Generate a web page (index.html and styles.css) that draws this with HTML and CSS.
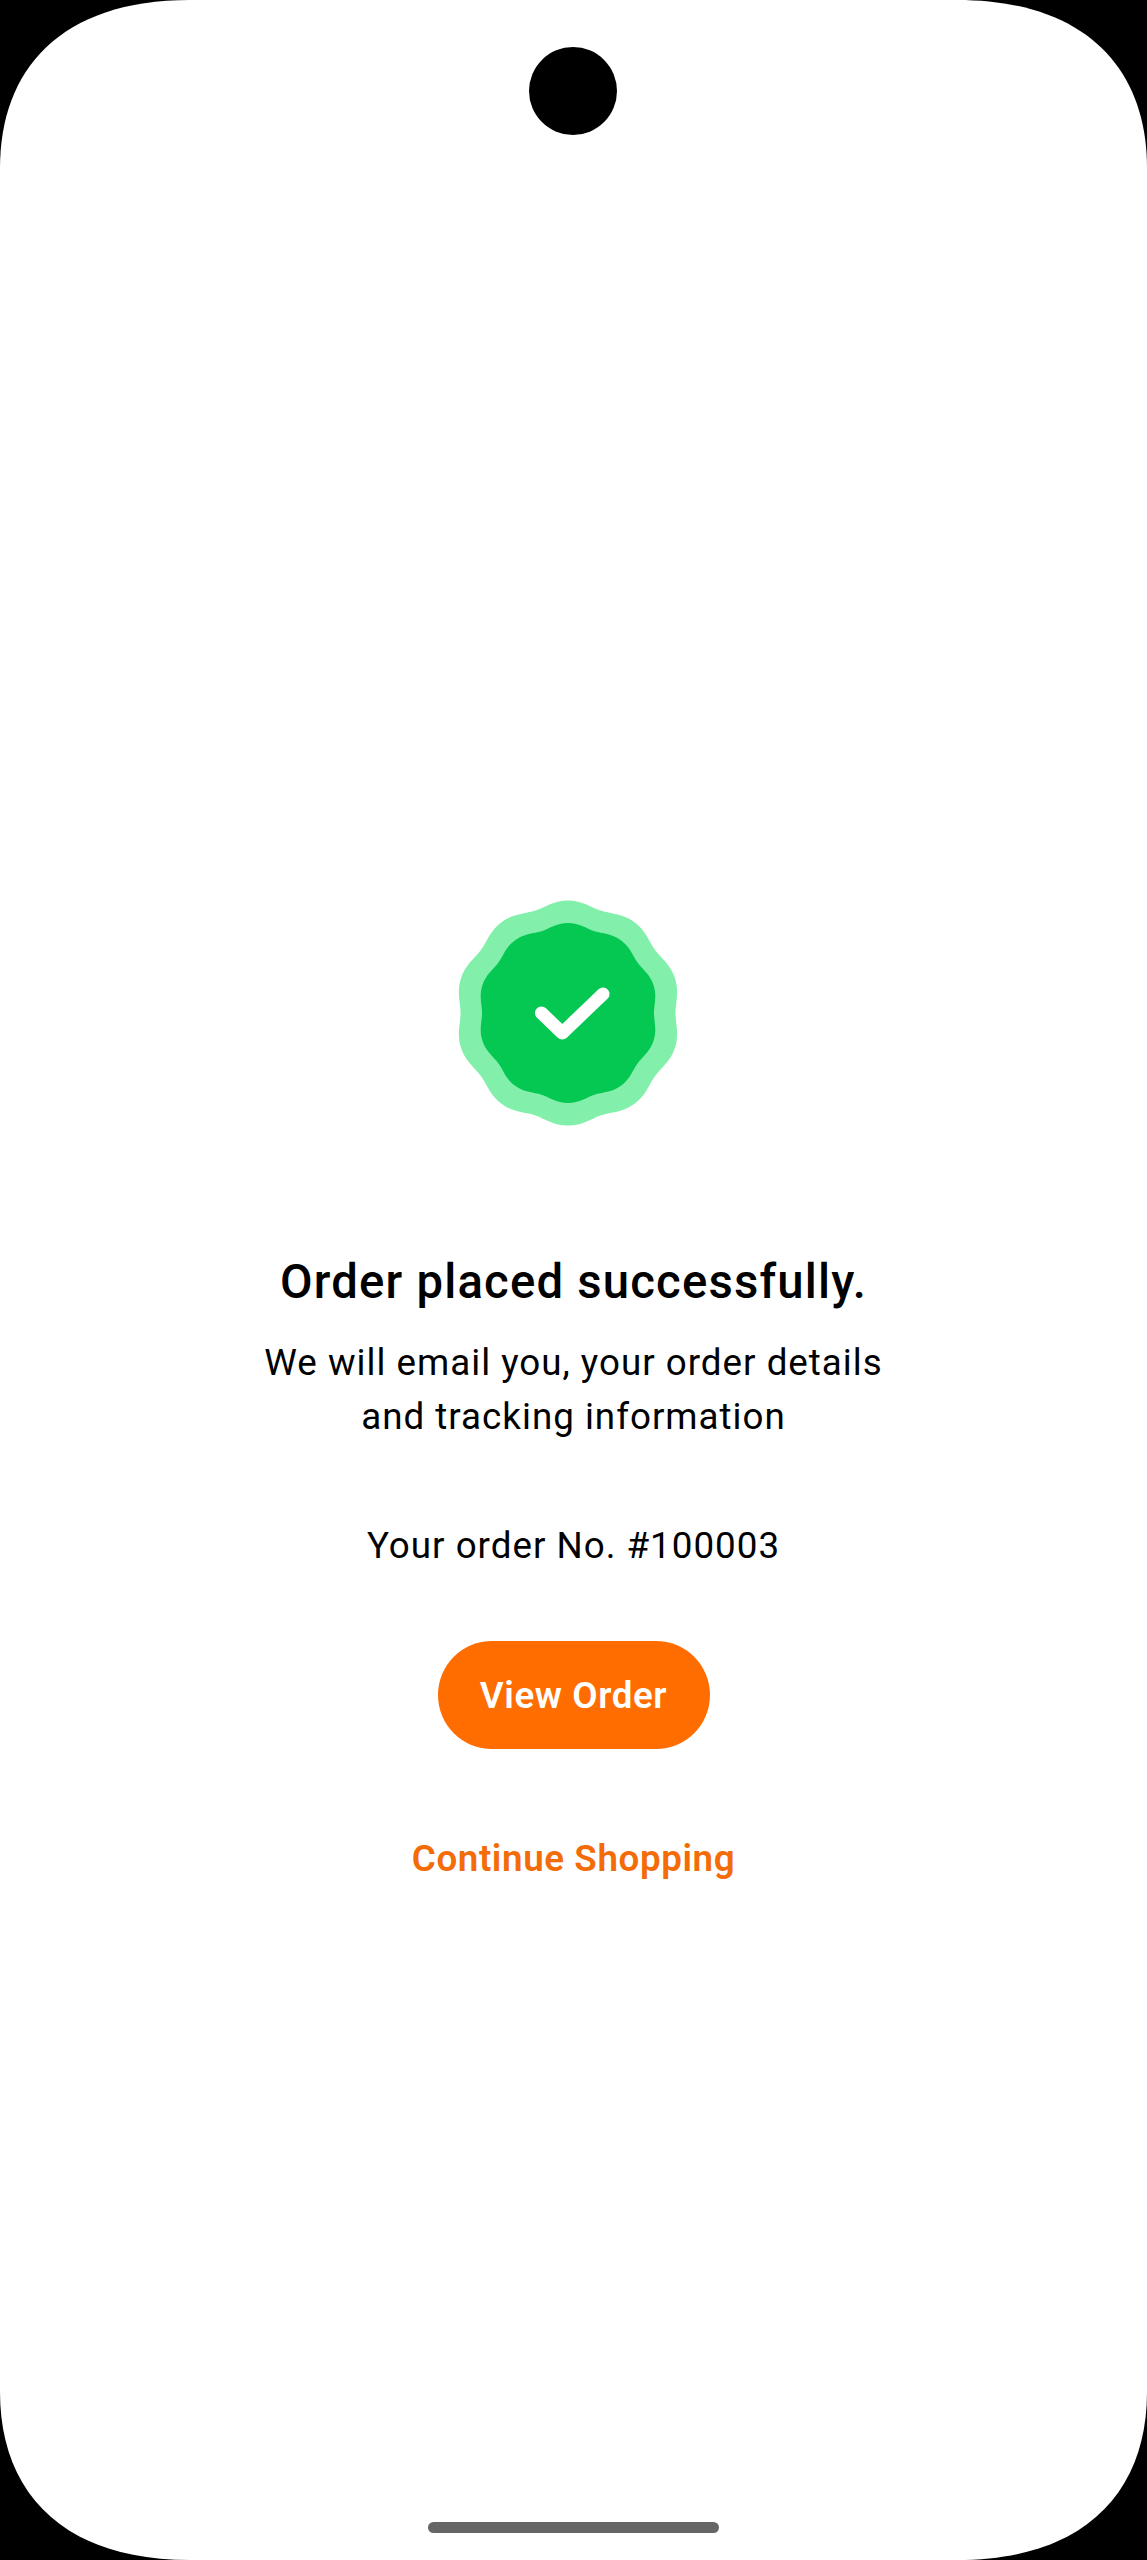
FILE: index.html
```html
<!DOCTYPE html>
<html>
<head>
  <title>Order placed</title>
  <link rel="stylesheet" href="styles.css">
</head>
<body>
  <div class="screen">
    <div class="camera"></div>

    <svg class="badge" width="226" height="226" viewBox="-113 -113 226 226">
      <defs>
        <path id="blob" d="M0 -100 C13 -100 20.95 -93.61 29.51 -90.83 C38.07 -88.05 48.26 -88.54 58.78 -80.9 C69.3 -73.26 71.97 -63.41 77.26 -56.13 C82.55 -48.85 91.09 -43.26 95.11 -30.9 C99.13 -18.54 95.5 -9 95.5 0 C95.5 9 99.13 18.54 95.11 30.9 C91.09 43.26 82.55 48.85 77.26 56.13 C71.97 63.41 69.3 73.26 58.78 80.9 C48.26 88.54 38.07 88.05 29.51 90.83 C20.95 93.61 13 100 0 100 C-13 100 -20.95 93.61 -29.51 90.83 C-38.07 88.05 -48.26 88.54 -58.78 80.9 C-69.3 73.26 -71.97 63.41 -77.26 56.13 C-82.55 48.85 -91.09 43.26 -95.11 30.9 C-99.13 18.54 -95.5 9 -95.5 0 C-95.5 -9 -99.13 -18.54 -95.11 -30.9 C-91.09 -43.26 -82.55 -48.85 -77.26 -56.13 C-71.97 -63.41 -69.3 -73.26 -58.78 -80.9 C-48.26 -88.54 -38.07 -88.05 -29.51 -90.83 C-20.95 -93.61 -13 -100 0 -100 Z"/>
      </defs>
      <use href="#blob" transform="scale(1.125)" fill="#82efab"/>
      <use href="#blob" transform="scale(0.9)" fill="#05c853"/>
      <path d="M-26.5 0 L-5.7 20 L35 -19" fill="none" stroke="#fff" stroke-width="13" stroke-linecap="round" stroke-linejoin="round"/>
    </svg>

    <h2 class="title">Order placed successfully.</h2>
    <p class="message">We will email you, your order details<br>and tracking information</p>
    <p class="order-no">Your order No. #100003</p>

    <button class="view-btn">View Order</button>
    <a class="continue-link" href="#">Continue Shopping</a>

    <div class="home-bar"></div>
  </div>
</body>
</html>
```

FILE: styles.css
```css
* {
  box-sizing: border-box;
}

body {
  margin: 0;
  background-color: #000;
  font-family: Roboto, "Liberation Sans", sans-serif;
  color: #000;
}

.screen {
  position: relative;
  width: 1147px;
  height: 2560px;
  padding-top: 900px;
  display: flex;
  flex-direction: column;
  align-items: center;
  background-color: #fff;
  clip-path: path("M190 0 H957 C1087 0 1147 70 1147 168 V2392 C1147 2490 1087 2560 957 2560 H190 C60 2560 0 2490 0 2392 V168 C0 70 60 0 190 0 Z");
}

.camera {
  position: absolute;
  top: 47px;
  left: 529px;
  width: 88px;
  height: 88px;
  border-radius: 50%;
  background-color: #000;
}

.badge {
  display: block;
  margin-right: 11px;
}

.title {
  margin: 126px 0 0;
  font-size: 47.25px;
  font-weight: 500;
  line-height: 60px;
  letter-spacing: 1.2px;
}

.message {
  margin: 24px 0 0;
  font-size: 36.75px;
  line-height: 54px;
  letter-spacing: 1px;
  text-align: center;
}

.order-no {
  margin: 75px 0 0;
  font-size: 36.75px;
  line-height: 54px;
  letter-spacing: 1px;
}

.view-btn {
  margin-top: 68px;
  width: 272px;
  height: 108px;
  border: none;
  border-radius: 54px;
  background-color: #ff6d00;
  color: #fff;
  font-family: inherit;
  font-size: 36.75px;
  font-weight: 600;
  letter-spacing: 0.6px;
}

.continue-link {
  margin-top: 83px;
  font-size: 36.75px;
  font-weight: 600;
  line-height: 54px;
  letter-spacing: 0.6px;
  color: #f36c08;
  text-decoration: none;
}

.home-bar {
  margin-top: auto;
  margin-bottom: 27px;
  width: 291px;
  height: 11px;
  border-radius: 6px;
  background-color: #666;
}
```
